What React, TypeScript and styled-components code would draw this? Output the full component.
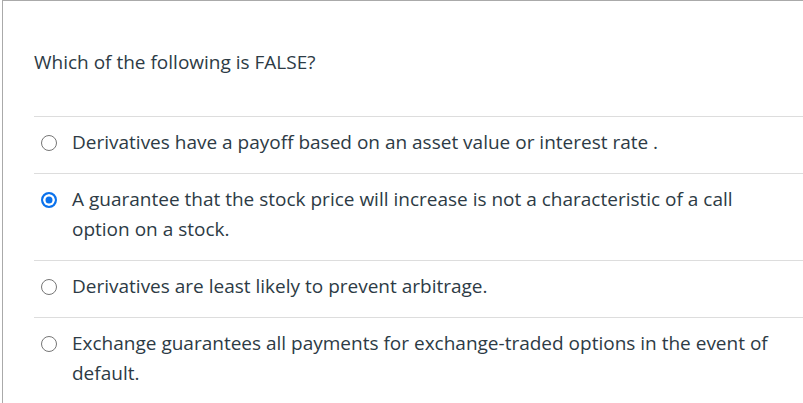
import React from 'react';
import styled, { createGlobalStyle } from 'styled-components';

const GlobalStyle = createGlobalStyle`
  html, body {
    margin: 0;
    padding: 0;
    background: #ffffff;
  }
  body {
    font-family: 'Open Sans', Lato, 'Liberation Sans', sans-serif;
    color: #2d3b45;
  }
`;

const answers = [
  { id: 'a1', text: 'Derivatives have a payoff based on an asset value or interest rate .', checked: false },
  {
    id: 'a2',
    text: 'A guarantee that the stock price will increase is not a characteristic of a call option on a stock.',
    checked: true
  },
  { id: 'a3', text: 'Derivatives are least likely to prevent arbitrage.', checked: false },
  {
    id: 'a4',
    text: 'Exchange guarantees all payments for exchange-traded options in the event of default.',
    checked: false
  }
];

const QuestionCard = styled.div`
  margin-left: 2px;
  border-top: 1px solid #aaaaaa;
  border-left: 1px solid #aaaaaa;
  padding-left: 31px;
  min-height: 402px;
  box-sizing: border-box;
`;

const QuestionText = styled.div`
  padding: 46px 0 39px;
  font-size: 19px;
  line-height: 30px;
`;

const AnswerList = styled.div`
  display: flex;
  flex-direction: column;
`;

const AnswerRow = styled.label`
  display: flex;
  align-items: flex-start;
  gap: 15px;
  border-top: 1px solid #dddddd;
  padding: 10px 20px 16px 7px;
  font-size: 19px;
  line-height: 30px;
  cursor: pointer;
`;

const Radio = styled.input.attrs({ type: 'radio' })`
  appearance: none;
  flex: none;
  width: 16px;
  height: 16px;
  margin: 8px 0 0;
  border-radius: 50%;
  border: 1.5px solid #767676;
  box-sizing: border-box;
  background: #ffffff;

  &:checked {
    border: 2px solid #0b72ec;
    background: #0b72ec;
    box-shadow: inset 0 0 0 2.5px #ffffff;
  }
`;

const AnswerText = styled.span`
  max-width: 705px;
`;

export default function App() {
  return (
    <>
      <GlobalStyle />
      <QuestionCard>
        <QuestionText>Which of the following is FALSE?</QuestionText>
        <AnswerList>
          {answers.map((a) => (
            <AnswerRow key={a.id}>
              <Radio name="q1" defaultChecked={a.checked} />
              <AnswerText>{a.text}</AnswerText>
            </AnswerRow>
          ))}
        </AnswerList>
      </QuestionCard>
    </>
  );
}
